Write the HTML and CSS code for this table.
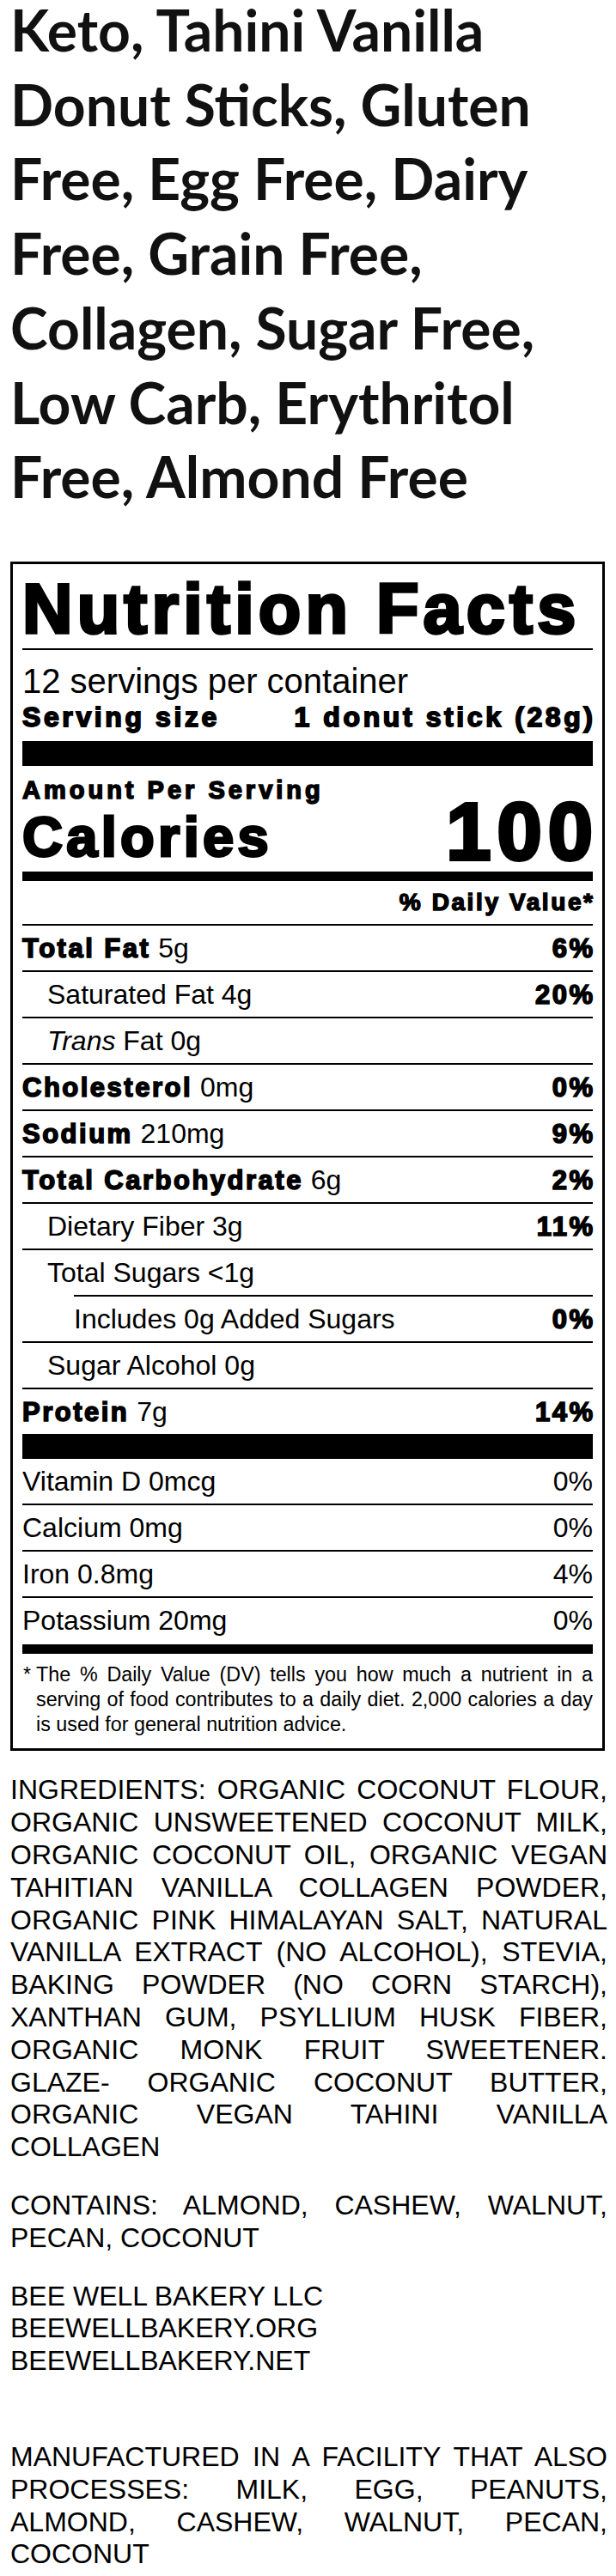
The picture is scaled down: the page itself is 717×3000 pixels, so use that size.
FILE: index.html
```html
<!DOCTYPE html>
<html lang="en">
<head>
<meta charset="utf-8">
<title>Keto, Tahini Vanilla Donut Sticks</title>
<link rel="stylesheet" href="styles.css">
</head>
<body>
<main class="page">
  <h1 class="product-title">Keto, Tahini Vanilla Donut Sticks, Gluten Free, Egg Free, Dairy Free, Grain Free, Collagen, Sugar Free, Low Carb, Erythritol Free, Almond Free</h1>

  <section class="label">
    <h2 class="label-title">Nutrition Facts</h2>
    <div class="servings">
      <p class="servings-count">12 servings per container</p>
      <p class="serving-size"><span>Serving size</span><span class="serving-amount">1 donut stick (28g)</span></p>
    </div>
    <div class="bar bar-thick"></div>
    <div class="calories">
      <div class="calories-left">
        <p class="amount">Amount Per Serving</p>
        <p class="calories-label">Calories</p>
      </div>
      <p class="calories-value">100</p>
    </div>
    <div class="bar bar-medium"></div>
    <p class="dv-head">% Daily Value*</p>
    <ul class="nutrients">
      <li class="row"><span><b>Total Fat</b> 5g</span><b class="pct">6%</b></li>
      <li class="row indent"><span>Saturated Fat 4g</span><b class="pct">20%</b></li>
      <li class="row indent"><span><i>Trans</i> Fat 0g</span></li>
      <li class="row"><span><b>Cholesterol</b> 0mg</span><b class="pct">0%</b></li>
      <li class="row"><span><b>Sodium</b> 210mg</span><b class="pct">9%</b></li>
      <li class="row"><span><b>Total Carbohydrate</b> 6g</span><b class="pct">2%</b></li>
      <li class="row indent"><span>Dietary Fiber 3g</span><b class="pct">11%</b></li>
      <li class="row indent"><span>Total Sugars &lt;1g</span></li>
      <li class="row indent-2"><span>Includes 0g Added Sugars</span><b class="pct">0%</b></li>
      <li class="row indent"><span>Sugar Alcohol 0g</span></li>
      <li class="row"><span><b>Protein</b> 7g</span><b class="pct">14%</b></li>
    </ul>
    <div class="bar bar-thick"></div>
    <ul class="nutrients vitamins">
      <li class="row"><span>Vitamin D 0mcg</span><span>0%</span></li>
      <li class="row"><span>Calcium 0mg</span><span>0%</span></li>
      <li class="row"><span>Iron 0.8mg</span><span>4%</span></li>
      <li class="row"><span>Potassium 20mg</span><span>0%</span></li>
    </ul>
    <div class="bar bar-medium bar-end"></div>
    <div class="footnote">
      <span class="footnote-mark">*</span>
      <p class="footnote-text">The % Daily Value (DV) tells you how much a nutrient in a serving of food contributes to a daily diet. 2,000 calories a day is used for general nutrition advice.</p>
    </div>
  </section>

  <section class="info">
    <p>INGREDIENTS: ORGANIC COCONUT FLOUR, ORGANIC UNSWEETENED COCONUT MILK, ORGANIC COCONUT OIL, ORGANIC VEGAN TAHITIAN VANILLA COLLAGEN POWDER, ORGANIC PINK HIMALAYAN SALT, NATURAL VANILLA EXTRACT (NO ALCOHOL), STEVIA, BAKING POWDER (NO CORN STARCH), XANTHAN GUM, PSYLLIUM HUSK FIBER, ORGANIC MONK FRUIT SWEETENER. GLAZE- ORGANIC COCONUT BUTTER, ORGANIC VEGAN TAHINI VANILLA COLLAGEN</p>
    <p>CONTAINS: ALMOND, CASHEW, WALNUT, PECAN, COCONUT</p>
    <p>BEE WELL BAKERY LLC<br>BEEWELLBAKERY.ORG<br>BEEWELLBAKERY.NET</p>
    <p class="facility">MANUFACTURED IN A FACILITY THAT ALSO PROCESSES: MILK, EGG, PEANUTS, ALMOND, CASHEW, WALNUT, PECAN, COCONUT</p>
  </section>
</main>
</body>
</html>
```

FILE: styles.css
```css
* {
  box-sizing: border-box;
}

html,
body {
  margin: 0;
  padding: 0;
  background: #fff;
}

body {
  color: #000;
  font-family: "Liberation Sans", Arial, sans-serif;
}

.page {
  padding: 0 10px 0 12px;
}

.product-title {
  margin: -8px 0 55.5px;
  font-family: Lato, "Open Sans", sans-serif;
  font-weight: 700;
  font-size: 66px;
  line-height: 86.7px;
  color: #111;
}

/* Nutrition label */
.label {
  width: 692px;
  border: 3px solid #000;
  padding: 11.5px 11px 13px;
}

.label p {
  margin: 0;
}

.label-title {
  margin: 0;
  padding-bottom: 5px;
  border-bottom: 2px solid #000;
  font-size: 81px;
  line-height: 81px;
  font-weight: 700;
  letter-spacing: 5.2px;
  -webkit-text-stroke: 3.5px #000;
  white-space: nowrap;
}

.servings {
  padding: 14px 0 8px;
}

.servings-count {
  font-size: 40px;
  line-height: 44px;
}

.serving-size {
  display: flex;
  justify-content: space-between;
  font-size: 32px;
  line-height: 40px;
  font-weight: 700;
  letter-spacing: 3.6px;
  -webkit-text-stroke: 1.8px #000;
}

.serving-amount {
  margin-right: -3.6px;
}

.bar {
  background: #000;
}

.bar-thick {
  height: 29px;
}

.bar-medium {
  height: 11px;
}

.bar-end {
  margin-top: 2px;
}

.calories {
  display: flex;
  justify-content: space-between;
  padding-top: 13px;
}

.amount {
  font-size: 29px;
  line-height: 30px;
  font-weight: 700;
  letter-spacing: 4px;
  -webkit-text-stroke: 1.6px #000;
}

.calories-label {
  font-size: 65px;
  line-height: 80px;
  font-weight: 700;
  letter-spacing: 4.3px;
  -webkit-text-stroke: 3px #000;
}

.calories-value {
  align-self: flex-end;
  margin-right: -7px !important;
  font-size: 94px;
  line-height: 92px;
  font-weight: 700;
  letter-spacing: 7px;
  -webkit-text-stroke: 4px #000;
}

.dv-head {
  margin-right: -2.6px !important;
  padding: 10px 0;
  text-align: right;
  font-size: 28px;
  line-height: 30px;
  font-weight: 700;
  letter-spacing: 2.6px;
  -webkit-text-stroke: 1.5px #000;
}

.nutrients {
  list-style: none;
  margin: 0;
  padding: 0;
}

.row {
  display: flex;
  justify-content: space-between;
  align-items: baseline;
  height: 54px;
  padding: 11px 0;
  border-top: 2px solid #000;
  font-size: 32px;
  line-height: 30px;
}

.row b {
  font-weight: 700;
  font-size: 31px;
  letter-spacing: 2.5px;
  -webkit-text-stroke: 1.6px #000;
}

.row .pct {
  margin-right: -2.5px;
}

.row i {
  font-style: italic;
}

.indent {
  padding-left: 29px;
}

.indent-2 {
  margin-left: 60px;
}

.vitamins .row:first-child {
  height: 52px;
  border-top: 0;
}

.footnote {
  display: flex;
  padding-top: 10.5px;
  font-size: 23.3px;
  line-height: 29px;
}

.footnote-mark {
  flex: none;
  width: 16px;
  padding-left: 1px;
}

.footnote-text {
  flex: 1;
  text-align: justify;
}

/* Ingredients and company info */
.info {
  margin-top: 27px;
  font-size: 32px;
  line-height: 37.8px;
  text-align: justify;
}

.info p {
  margin: 0 0 30px;
}

.info .facility {
  margin-top: 74px;
}
```
